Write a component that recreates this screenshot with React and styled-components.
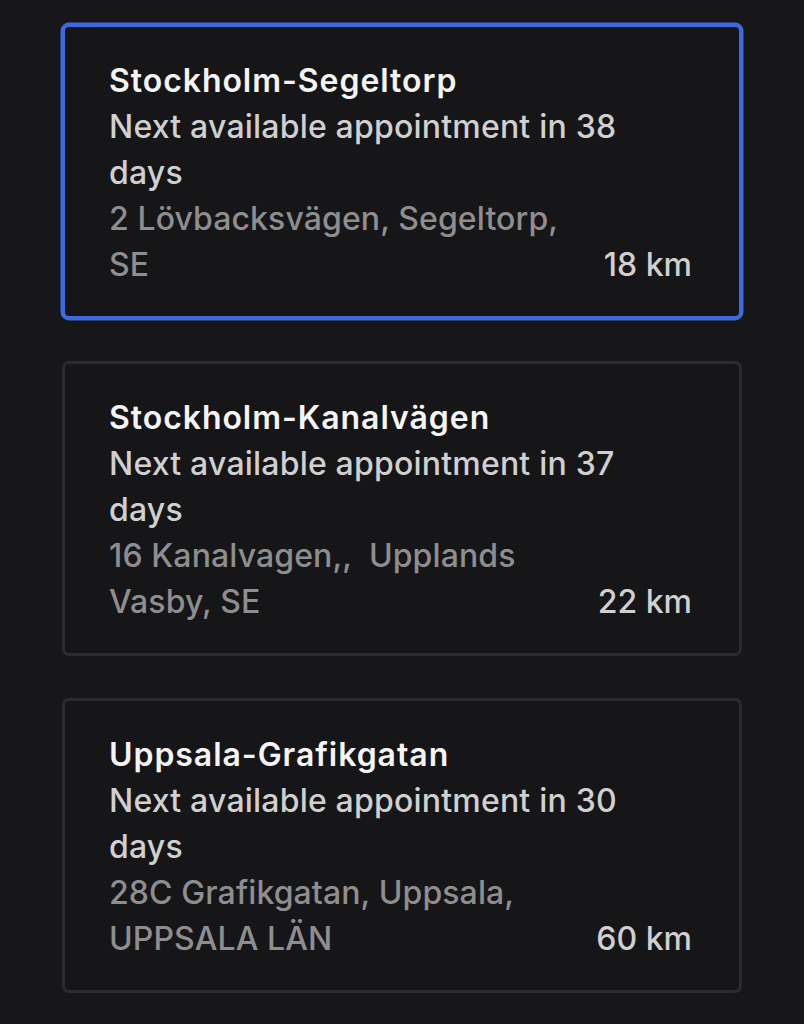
import styled, { createGlobalStyle } from 'styled-components'

const GlobalStyle = createGlobalStyle`
	html, body {
		margin: 0;
		padding: 0;
		background: #171719;
	}
	body {
		font-family: Inter, "Noto Sans", sans-serif;
		-webkit-font-smoothing: antialiased;
	}
`

const centers = [
	{
		name: 'Stockholm-Segeltorp',
		days: 38,
		address: '2 Lövbacksvägen, Segeltorp, SE',
		distance: 18,
	},
	{
		name: 'Stockholm-Kanalvägen',
		days: 37,
		address: '16 Kanalvagen,,  Upplands Vasby, SE',
		distance: 22,
	},
	{
		name: 'Uppsala-Grafikgatan',
		days: 30,
		address: '28C Grafikgatan, Uppsala, UPPSALA LÄN',
		distance: 60,
	},
]

const App = () => {
	return (
		<>
			<GlobalStyle />
			<Page>
				<List>
					{centers.map((c, i) => (
						<Card key={c.name} $selected={i === 0}>
							<Title>{c.name}</Title>
							<Availability>Next available appointment in {c.days} days</Availability>
							<Footer>
								<Address>{c.address}</Address>
								<Distance>{c.distance} km</Distance>
							</Footer>
						</Card>
					))}
				</List>
			</Page>
		</>
	)
}

export default App

const Page = styled.div`
	min-height: 1024px;
	padding: 24px 62px;
	box-sizing: border-box;
`

const List = styled.div`
	display: flex;
	flex-direction: column;
	gap: 42px;
`

const Card = styled.div`
	height: 295px;
	box-sizing: border-box;
	padding: 31px 47px 0 44px;
	border-radius: 7px;
	border: 3px solid ${(p) => (p.$selected ? '#3e6ae1' : '#2b2c2e')};
	box-shadow: ${(p) => (p.$selected ? '0 0 0 1.5px #3e6ae1' : 'none')};
	background: #161618;
	display: flex;
	flex-direction: column;
`

const Title = styled.div`
	font-size: 32px;
	font-weight: 600;
	line-height: 46px;
	color: #f4f4f4;
	letter-spacing: 0.95px;
`

const Availability = styled.div`
	font-size: 32px;
	font-weight: 500;
	line-height: 46px;
	color: #d0d0d1;
	letter-spacing: 0.2px;
	max-width: 540px;
`

const Footer = styled.div`
	display: flex;
	align-items: flex-end;
	justify-content: space-between;
`

const Address = styled.div`
	font-size: 32px;
	font-weight: 500;
	line-height: 46px;
	color: #8e8e90;
	letter-spacing: 0.1px;
	white-space: pre-wrap;
	max-width: 470px;
`

const Distance = styled.div`
	font-size: 32px;
	font-weight: 500;
	line-height: 46px;
	color: #d0d0d1;
	white-space: nowrap;
`
